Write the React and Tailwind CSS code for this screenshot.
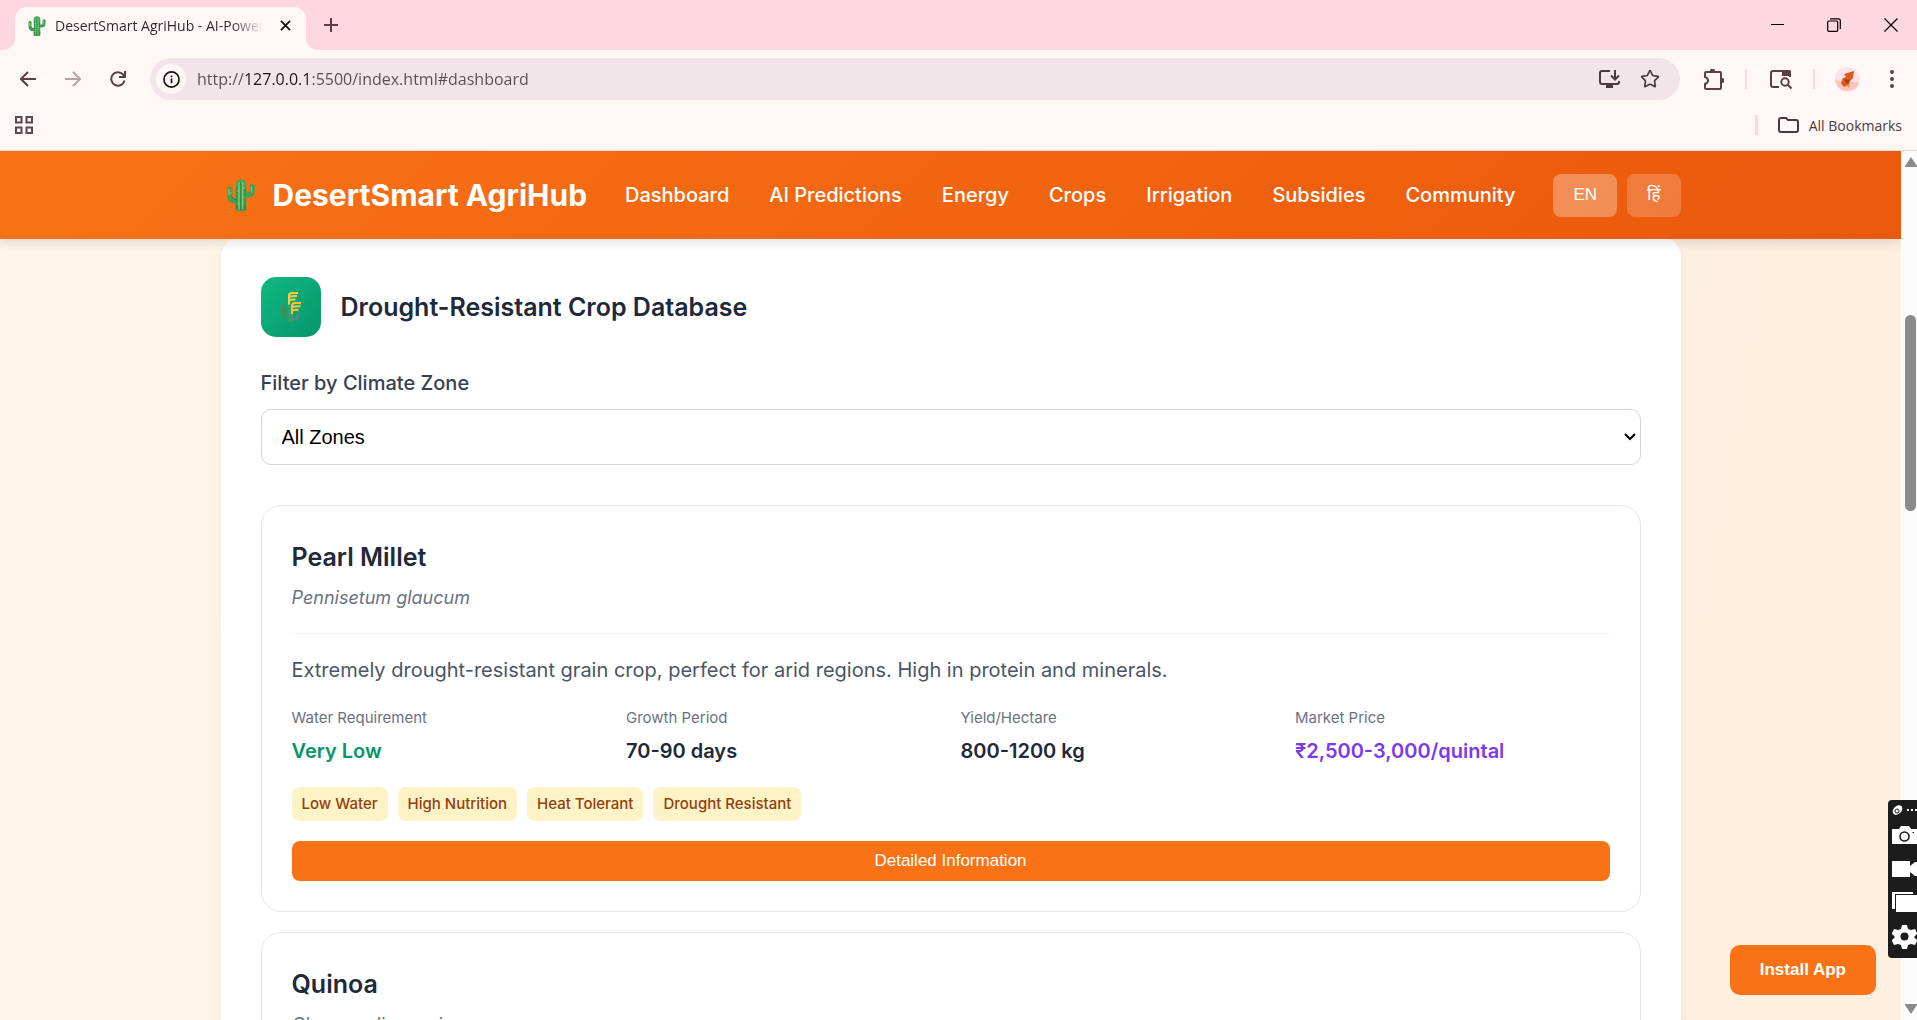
import { Star } from 'lucide-react';

const navItems = ['Dashboard', 'AI Predictions', 'Energy', 'Crops', 'Irrigation', 'Subsidies', 'Community'];

const crops = [
    {
        name: 'Pearl Millet',
        scientific: 'Pennisetum glaucum',
        description: 'Extremely drought-resistant grain crop, perfect for arid regions. High in protein and minerals.',
        stats: [
            { label: 'Water Requirement', value: 'Very Low', color: 'text-[#059669]' },
            { label: 'Growth Period', value: '70-90 days', color: 'text-gray-800' },
            { label: 'Yield/Hectare', value: '800-1200 kg', color: 'text-gray-800' },
            { label: 'Market Price', value: '₹2,500-3,000/quintal', color: 'text-[#7c3aed]' },
        ],
        tags: ['Low Water', 'High Nutrition', 'Heat Tolerant', 'Drought Resistant'],
    },
    {
        name: 'Quinoa',
        scientific: 'Chenopodium quinoa',
    },
];

const Cactus = ({ className }) => (
    <svg viewBox="0 0 28 32" className={className} aria-hidden="true">
        <g fill="none" strokeLinecap="round" strokeLinejoin="round">
            <path d="M2.800 10v6.500q0 5.500 5.500 5.500h4M25.300 7.500v4q0 4.500-4.500 4.500h-4" stroke="#3f9f52" strokeWidth="5" />
            <path d="M14 5.500v21" stroke="#45a957" strokeWidth="10.500" />
            <path d="M9 26h10v5.500H9z" fill="#3d9950" stroke="#3d9950" strokeWidth="0.500" />
            <path d="M2 10.500v5M24.500 8v3.500M12 4v26M15.500 3.500v26" stroke="#74c878" strokeWidth="1.500" />
            <path d="M10 8v22M13.800 4v27M18 8v22M5 18q1 2.500 4 2.700" stroke="#2b7f45" strokeWidth="0.900" />
            <path d="M11 12v.1M17 18v.1M11 25v.1M17 9v.1M4 14v.1M25 13v.1" stroke="#e7e58f" strokeWidth="1" />
        </g>
    </svg>
);

const Crop = () => (
    <svg viewBox="0 0 20 30" className="h-[30px] w-5" fill="none" aria-hidden="true">
        <path d="M1 12l4 4v12q-4-2-4-6z" fill="#4d8a52" />
        <path d="M18 21l-4 3v5q4-1 4-5z" fill="#5c8390" />
        <path d="M8.500 12v18M11.500 21v9" stroke="#5d9468" strokeWidth="1.800" />
        <path d="M8 12.500V3.500Q8 1 11 1h6M8.500 4.800q2-1 7.500-.8M8.500 8.300q2-1 6-.8" stroke="#fcc94a" strokeWidth="2" />
        <path d="M11 22v-8q0-3 3-3h6M11.500 15q2-1 8-.8M11.500 18.500q2-1 6-.8" stroke="#fcc23c" strokeWidth="2" />
    </svg>
);

const BrowserBar = () => (
    <div className="shrink-0 bg-[#fff7f6] text-[#4b3a3d]" style={{ fontFamily: '"Open Sans", sans-serif' }}>
        {/* Tab strip */}
        <div className="flex h-[50px] items-end bg-[#ffd7df]">
            <div className="h-3 w-[15px] bg-[#fff7f6]">
                <div className="h-3 w-[15px] rounded-br-xl bg-[#ffd7df]" />
            </div>
            <div className="flex h-[43px] w-[291px] items-center rounded-t-xl bg-[#fff7f6] pr-2 pb-[6px] pl-3">
                <Cactus className="h-5 w-5" />
                <span className="ml-2 w-[208px] overflow-hidden whitespace-nowrap bg-linear-to-r from-[#332528] from-85% to-transparent bg-clip-text text-[14px] text-transparent">
                    DesertSmart AgriHub - AI-Powered
                </span>
                <button aria-label="Close tab" className="ml-3 flex h-5 w-5 items-center justify-center">
                    <svg viewBox="0 0 12 12" className="h-[11px] w-[11px]" stroke="#1f1517" strokeWidth="2"><path d="M1 1l10 10M11 1L1 11" /></svg>
                </button>
            </div>
            <div className="h-3 w-3 bg-[#fff7f6]">
                <div className="h-3 w-3 rounded-bl-xl bg-[#ffd7df]" />
            </div>
            <button aria-label="New tab" className="flex h-[50px] w-[26px] items-center justify-center">
                <svg viewBox="0 0 14 14" className="h-[14px] w-[14px]" stroke="#5b3f45" strokeWidth="2"><path d="M7 0v14M0 7h14" /></svg>
            </button>
            <div className="ml-auto flex h-[50px] items-center gap-[43px] pr-[19px]">
                <button aria-label="Minimize"><svg viewBox="0 0 13 13" className="h-[13px] w-[13px]" stroke="#000"><path d="M0 5.500h13" /></svg></button>
                <button aria-label="Restore">
                    <svg viewBox="0 0 14 14" className="h-[14px] w-[14px]" fill="none" stroke="#000" strokeWidth="1.200">
                        <rect x=".7" y="3" width="10" height="10.300" rx="1" /><path d="M3 .8h8.500q1.800 0 1.800 1.800V11" />
                    </svg>
                </button>
                <button aria-label="Close"><svg viewBox="0 0 14 14" className="h-[14px] w-[14px]" stroke="#000" strokeWidth="1.200"><path d="M.5.5l13 13M13.500.5l-13 13" /></svg></button>
            </div>
        </div>

        {/* Address row */}
        <div className="flex h-[58px] items-center">
            <div className="flex w-[150px] items-center gap-[29px] pl-5">
                <button aria-label="Back"><svg viewBox="0 0 16 16" className="h-4 w-4" fill="none" stroke="#5b3f45" strokeWidth="2"><path d="M8 1L1 8l7 7M1 8h15" /></svg></button>
                <button aria-label="Forward"><svg viewBox="0 0 16 16" className="h-4 w-4" fill="none" stroke="#b3a4a6" strokeWidth="2"><path d="M8 1l7 7-7 7M15 8H0" /></svg></button>
                <button aria-label="Reload">
                    <svg viewBox="0 0 16 16" className="h-4 w-4" fill="none" stroke="#5b3f45" strokeWidth="2"><path d="M14.500 9.500A6.700 6.700 0 1 1 13 3.500L14.800 5.300M15 0v6H9" /></svg>
                </button>
            </div>
            <div className="flex h-[42px] flex-1 items-center rounded-full bg-[#f1e5ea] pr-5 pl-[6px]">
                <span className="flex h-[30px] w-[30px] items-center justify-center rounded-full bg-[#fff7f6]">
                    <svg viewBox="0 0 18 18" className="h-[17px] w-[17px]" fill="none" stroke="#1f1517" strokeWidth="1.800"><circle cx="9" cy="9" r="8" /><path d="M9 8v5M9 4.800v1.700" /></svg>
                </span>
                {/* host part of the address is darker than the rest */}
                <input
                    aria-label="Address"
                    type="text"
                    defaultValue="http://127.0.0.1:5500/index.html#dashboard"
                    className="ml-[11px] min-w-0 flex-1 bg-[linear-gradient(90deg,#5c4c50_48px,#1f1517_48px,#1f1517_114px,#5c4c50_114px)] bg-clip-text text-[16px] text-transparent outline-none"
                />
                <div className="flex items-center gap-5">
                    <button aria-label="Install">
                        <svg viewBox="0 0 21 18" className="h-[18px] w-[21px]" fill="none" stroke="#4b3a3d" strokeWidth="2">
                            <path d="M11 1H3Q1 1 1 3v9q0 2 2 2h15q2 0 2-2v-1M16 0v9M12 5.500l4 4 4-4" /><path d="M7 16.500h7" strokeWidth="3" />
                        </svg>
                    </button>
                    <button aria-label="Bookmark"><Star className="h-5 w-5" color="#4b3a3d" strokeLinejoin="miter" /></button>
                </div>
            </div>
            <div className="flex w-[237px] items-center pl-[23px]">
                <button aria-label="Extensions">
                    <svg viewBox="0 0 21 21" className="h-[21px] w-[21px]" fill="none" stroke="#5b3f45" strokeWidth="2">
                        <path d="M2 4q0-1 1-1h14q1 0 1 1v15q0 1-1 1H3q-1 0-1-1v-4q3-1 3-3.500T2 8z" />
                        <path d="M7 2a2.500 2.500 0 0 1 5 0zM19 9a2.500 2.500 0 0 1 0 5z" fill="#5b3f45" stroke="none" />
                    </svg>
                </button>
                <div className="ml-[21px] h-5 w-0.5 bg-[#ffd7df]" />
                <button aria-label="Side panel" className="ml-[23px]">
                    <svg viewBox="0 0 22 20" className="h-5 w-[22px]" fill="none" stroke="#5b3f45" strokeWidth="2">
                        <path d="M9 18H3q-2 0-2-2V4q0-2 2-2h15q2 0 2 2v4" /><path d="M12 1h7q2 0 2 2v4h-9z" fill="#5b3f45" stroke="none" />
                        <circle cx="15" cy="13" r="3.700" /><path d="M17.500 15.500L21.500 19.500" />
                    </svg>
                </button>
                <div className="ml-[21px] h-5 w-0.5 bg-[#ffd7df]" />
                <button aria-label="Profile" className="ml-5">
                    <svg viewBox="0 0 25 25" className="h-[25px] w-[25px]">
                        <circle cx="12.500" cy="12.500" r="12.500" fill="#f9e3e9" /><path d="M0 12l7 3 9-1 8 2a12.500 12.500 0 0 1-24-3z" fill="#fbc4bf" />
                        <path d="M9 7l10-3-1 7-3 3-1 4-5 2-3-4 2-5 3-1z" fill="#dd5a1e" /><path d="M9 12l6 1-3 4z" fill="#a43c12" /><path d="M11 18l4-1-1 4z" fill="#d9a15c" />
                    </svg>
                </button>
                <button aria-label="Menu" className="ml-[30px]">
                    <svg viewBox="0 0 4 18" className="h-[18px] w-1" fill="#5b3f45"><circle cx="2" cy="2" r="2" /><circle cx="2" cy="9" r="2" /><circle cx="2" cy="16" r="2" /></svg>
                </button>
            </div>
        </div>

        {/* Bookmarks row */}
        <div className="flex h-[43px] items-center border-b border-[#ecdadd] pr-[15px] pb-2 pl-[15px]">
            <button aria-label="Apps">
                <svg viewBox="0 0 18 18" className="h-[18px] w-[18px]" fill="none" stroke="#5a4a4d" strokeWidth="2">
                    <path d="M1 1h5.500v5.500H1zM11.500 1H17v5.500h-5.500zM1 11.500h5.500V17H1zM11.500 11.500H17V17h-5.500z" />
                </svg>
            </button>
            <div className="ml-auto h-5 w-[3px] bg-[#ffd7df]" />
            <button className="ml-5 flex items-center gap-[10px] text-[14px]">
                <svg viewBox="0 0 21 16" className="h-4 w-[21px]" fill="none" stroke="#4b3a3d" strokeWidth="2">
                    <path d="M1 3q0-2 2-2h5l2 2h8q2 0 2 2v8q0 2-2 2H3q-2 0-2-2z" />
                </svg>
                All Bookmarks
            </button>
        </div>
    </div>
);

const Header = () => (
    <header className="relative z-10 bg-[linear-gradient(135deg,#f97316,#ea580c)] shadow-[0_5px_10px_rgba(0,0,0,0.10)]">
        <div className="mx-auto flex h-[88px] max-w-[1500px] items-center justify-between px-5 text-white">
            <a href="#home" className="flex items-center gap-4 text-[30px] font-bold">
                <Cactus className="ml-1 h-8 w-8" />
                DesertSmart AgriHub
            </a>
            <nav className="flex gap-10 text-[20px] font-medium">
                {navItems.map((item) => (
                    <a key={item} href={`#${item.toLowerCase().replace(' ', '-')}`}>{item}</a>
                ))}
            </nav>
            <div className="flex gap-[10px] text-[17px]" style={{ fontFamily: '"Liberation Sans", "Noto Sans Devanagari", sans-serif' }}>
                <button className="h-[43px] rounded-lg bg-white/30 px-5">EN</button>
                <button className="h-[43px] rounded-lg bg-white/20 px-5">हिं</button>
            </div>
        </div>
    </header>
);

const CropCard = ({ crop }) => (
    <article className="rounded-[20px] border border-gray-200 p-[30px]">
        <div className="border-b border-gray-100 pb-5">
            <h3 className="text-[25px] leading-[42px] font-semibold text-gray-800">{crop.name}</h3>
            <p className="mt-[5px] text-[18px] leading-[30px] text-gray-500 italic">{crop.scientific}</p>
        </div>
        {crop.description && (
            <>
                <p className="mt-5 text-[20px] leading-[32px] text-gray-600">{crop.description}</p>
                <div className="mt-[17px] grid grid-cols-4 gap-5">
                    {crop.stats.map((stat) => (
                        <div key={stat.label}>
                            <div className="text-[15px] leading-[30px] text-gray-500">{stat.label}</div>
                            <div className={`text-[20px] leading-[36px] font-semibold ${stat.color}`}>{stat.value}</div>
                        </div>
                    ))}
                </div>
                <div className="mt-[18px] flex gap-[10px]">
                    {crop.tags.map((tag) => (
                        <span key={tag} className="rounded-lg bg-[#fef3c7] px-[10px] text-[15px] leading-[34px] font-medium text-[#92400e]">{tag}</span>
                    ))}
                </div>
                <button className="mt-5 h-10 w-full rounded-lg bg-[#f97316] text-[17px] text-white" style={{ fontFamily: '"Liberation Sans", sans-serif' }}>
                    Detailed Information
                </button>
            </>
        )}
    </article>
);

const Recorder = () => (
    <div className="absolute top-[649px] right-0 z-20 flex h-[158px] w-[29px] flex-col overflow-hidden rounded-l bg-[#1c1c1c]">
        <svg viewBox="0 0 29 158" className="h-[158px] w-[29px]" fill="#fff" aria-hidden="true">
            <ellipse cx="9.500" cy="10" rx="5.500" ry="4" transform="rotate(-45 9.500 10)" />
            <circle cx="9" cy="11" r="2" fill="none" stroke="#1c1c1c" />
            <path d="M19 9h2v2h-2zM23 9h2v2h-2zM27 9h2v2h-2z" />
            <path d="M4 29h7l2-3h8l2 3h6v15H4z" />
            <circle cx="16.500" cy="36.500" r="4.500" fill="none" stroke="#1c1c1c" strokeWidth="1.600" />
            <path d="M24.500 32h1.500v1h-1.500z" fill="#1c1c1c" />
            <path d="M4 61h18v5l5-4h2v14h-2l-5-4v5H4z" />
            <path d="M4 92h21v2H7v15H4zM8 95h21v17H8z" />
            <path d="M14 125h5l1 4 3 1 4-1 2 4v1l-3 3 3 3v1l-2 4-4-1-3 1-1 4h-5l-1-4-3-1-4 1-2-4v-1l3-3-3-3v-1l2-4 4 1 3-1z" />
            <circle cx="16.500" cy="136.500" r="4" fill="#1c1c1c" />
        </svg>
    </div>
);

const App = () => (
    <div className="flex h-screen flex-col overflow-hidden" style={{ fontFamily: 'Inter, "Noto Sans", sans-serif' }}>
        <BrowserBar />
        <div className="relative flex min-h-0 flex-1">
            <div className="min-w-0 flex-1 overflow-hidden bg-[linear-gradient(100deg,#fff5e9,#feefde)]">
                <Header />
                <main className="mx-auto max-w-[1500px] px-5">
                    <section className="-mt-0.5 rounded-[20px] bg-white p-10 shadow-[0_5px_8px_rgba(0,0,0,0.06)]">
                        <div className="flex items-center gap-5">
                            <div className="flex h-[60px] w-[60px] items-center justify-center rounded-[15px] bg-[linear-gradient(135deg,#10b981,#059669)]">
                                <Crop />
                            </div>
                            <h2 className="text-[25px] leading-[42px] font-semibold text-gray-800">Drought-Resistant Crop Database</h2>
                        </div>
                        <label htmlFor="zone" className="mt-[30px] block text-[20px] leading-[32px] font-medium text-gray-700">Filter by Climate Zone</label>
                        <div className="relative mt-[10px]">
                            <select
                                id="zone"
                                className="block h-14 w-full appearance-none rounded-[10px] border border-gray-300 bg-white px-5 text-[20px] text-black"
                                style={{ fontFamily: '"Liberation Sans", sans-serif' }}
                            >
                                <option>All Zones</option>
                                <option>Arid</option>
                                <option>Semi-Arid</option>
                            </select>
                            <svg viewBox="0 0 12 8" className="pointer-events-none absolute top-6 right-[5px] h-2 w-3" fill="none" stroke="#000" strokeWidth="2">
                                <path d="M1 1l5 5 5-5" />
                            </svg>
                        </div>
                        <div className="mt-10 flex flex-col gap-5">
                            {crops.map((crop) => <CropCard key={crop.name} crop={crop} />)}
                        </div>
                    </section>
                </main>
            </div>

            {/* Page scrollbar */}
            <div className="flex w-4 flex-col items-center bg-[#fcfcfc] py-[6px] pl-[3px]">
                <svg viewBox="0 0 12 10" className="h-[10px] w-3" fill="#8b8b8b"><path d="M6 0l6 9v1H0V9z" /></svg>
                <div className="mt-[148px] h-[196px] w-[11px] rounded-full bg-[#8b8b8b]" />
                <svg viewBox="0 0 12 10" className="mt-auto h-[10px] w-3" fill="#8b8b8b"><path d="M6 10l6-9V0H0v1z" /></svg>
            </div>

            <button
                className="absolute right-[41px] bottom-[25px] h-[50px] rounded-[10px] bg-[#f97316] px-[30px] text-[17px] font-bold text-white"
                style={{ fontFamily: '"Liberation Sans", sans-serif' }}
            >
                Install App
            </button>
            <Recorder />
        </div>
    </div>
);

export default App;
